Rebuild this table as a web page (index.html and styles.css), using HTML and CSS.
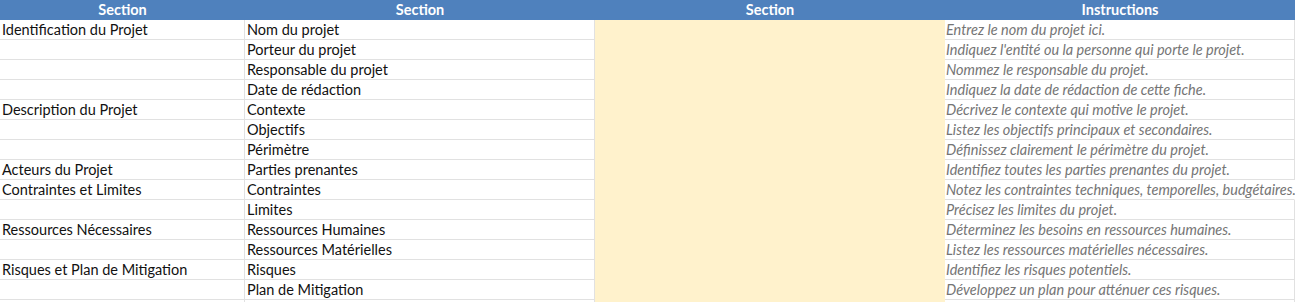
FILE: index.html
```html
<!DOCTYPE html>
<html lang="fr">
<head>
<meta charset="utf-8">
<link rel="stylesheet" href="styles.css">
</head>
<body>
<div class="sheet">
  <div class="hd">Section</div><div class="hd">Section</div><div class="hd">Section</div><div class="hd">Instructions</div><div class="edge"></div>

  <div class="c c1">Identification du Projet</div><div class="c c2">Nom du projet</div><div class="c c3"></div><div class="c c4">Entrez le nom du projet ici.</div><div class="edge"></div>
  <div class="c c1"></div><div class="c c2">Porteur du projet</div><div class="c c3"></div><div class="c c4">Indiquez l'entité ou la personne qui porte le projet.</div><div class="edge"></div>
  <div class="c c1"></div><div class="c c2">Responsable du projet</div><div class="c c3"></div><div class="c c4">Nommez le responsable du projet.</div><div class="edge"></div>
  <div class="c c1"></div><div class="c c2">Date de rédaction</div><div class="c c3"></div><div class="c c4">Indiquez la date de rédaction de cette fiche.</div><div class="edge"></div>
  <div class="c c1">Description du Projet</div><div class="c c2">Contexte</div><div class="c c3"></div><div class="c c4">Décrivez le contexte qui motive le projet.</div><div class="edge"></div>
  <div class="c c1"></div><div class="c c2">Objectifs</div><div class="c c3"></div><div class="c c4">Listez les objectifs principaux et secondaires.</div><div class="edge"></div>
  <div class="c c1"></div><div class="c c2">Périmètre</div><div class="c c3"></div><div class="c c4">Définissez clairement le périmètre du projet.</div><div class="edge"></div>
  <div class="c c1">Acteurs du Projet</div><div class="c c2">Parties prenantes</div><div class="c c3"></div><div class="c c4">Identifiez toutes les parties prenantes du projet.</div><div class="edge"></div>
  <div class="c c1">Contraintes et Limites</div><div class="c c2">Contraintes</div><div class="c c3"></div><div class="c c4 spill">Notez les contraintes techniques, temporelles, budgétaires.</div><div class="edge"></div>
  <div class="c c1"></div><div class="c c2">Limites</div><div class="c c3"></div><div class="c c4">Précisez les limites du projet.</div><div class="edge"></div>
  <div class="c c1">Ressources Nécessaires</div><div class="c c2">Ressources Humaines</div><div class="c c3"></div><div class="c c4">Déterminez les besoins en ressources humaines.</div><div class="edge"></div>
  <div class="c c1"></div><div class="c c2">Ressources Matérielles</div><div class="c c3"></div><div class="c c4">Listez les ressources matérielles nécessaires.</div><div class="edge"></div>
  <div class="c c1">Risques et Plan de Mitigation</div><div class="c c2">Risques</div><div class="c c3"></div><div class="c c4">Identifiez les risques potentiels.</div><div class="edge"></div>
  <div class="c c1"></div><div class="c c2">Plan de Mitigation</div><div class="c c3"></div><div class="c c4">Développez un plan pour atténuer ces risques.</div><div class="edge"></div>
  <div class="c c1"></div><div class="c c2"></div><div class="c c3"></div><div class="c c4"></div><div class="edge"></div>
</div>
</body>
</html>
```

FILE: styles.css
```css
html, body {
  margin: 0;
  padding: 0;
  overflow: hidden;
  background: #ffffff;
}

.sheet {
  display: grid;
  grid-template-columns: 245px 350px 350px 350px 1px;
  grid-auto-rows: 20px;
  width: 1296px;
  height: 302px;
  overflow: hidden;
  font-family: Lato, "Liberation Sans", sans-serif;
  font-size: 14.5px;
  color: #111111;
}

.hd {
  background: #4f81bd;
  color: #ffffff;
  font-weight: bold;
  text-align: center;
  line-height: 20px;
  white-space: nowrap;
}

.edge {
  background: #ffffff;
}

.c {
  box-sizing: border-box;
  border-bottom: 1px solid #e1e1e1;
  border-right: 1px solid #e1e1e1;
  line-height: 19px;
  white-space: nowrap;
  overflow: hidden;
  padding-left: 2px;
}

.c3 {
  background: #fff2cc;
  border-bottom-color: #fff2cc;
  border-right-color: #fff2cc;
}

.c4 {
  font-style: italic;
  color: #757575;
  padding-left: 1px;
}

.c4.spill {
  overflow: visible;
  border-right-color: transparent;
}
```
